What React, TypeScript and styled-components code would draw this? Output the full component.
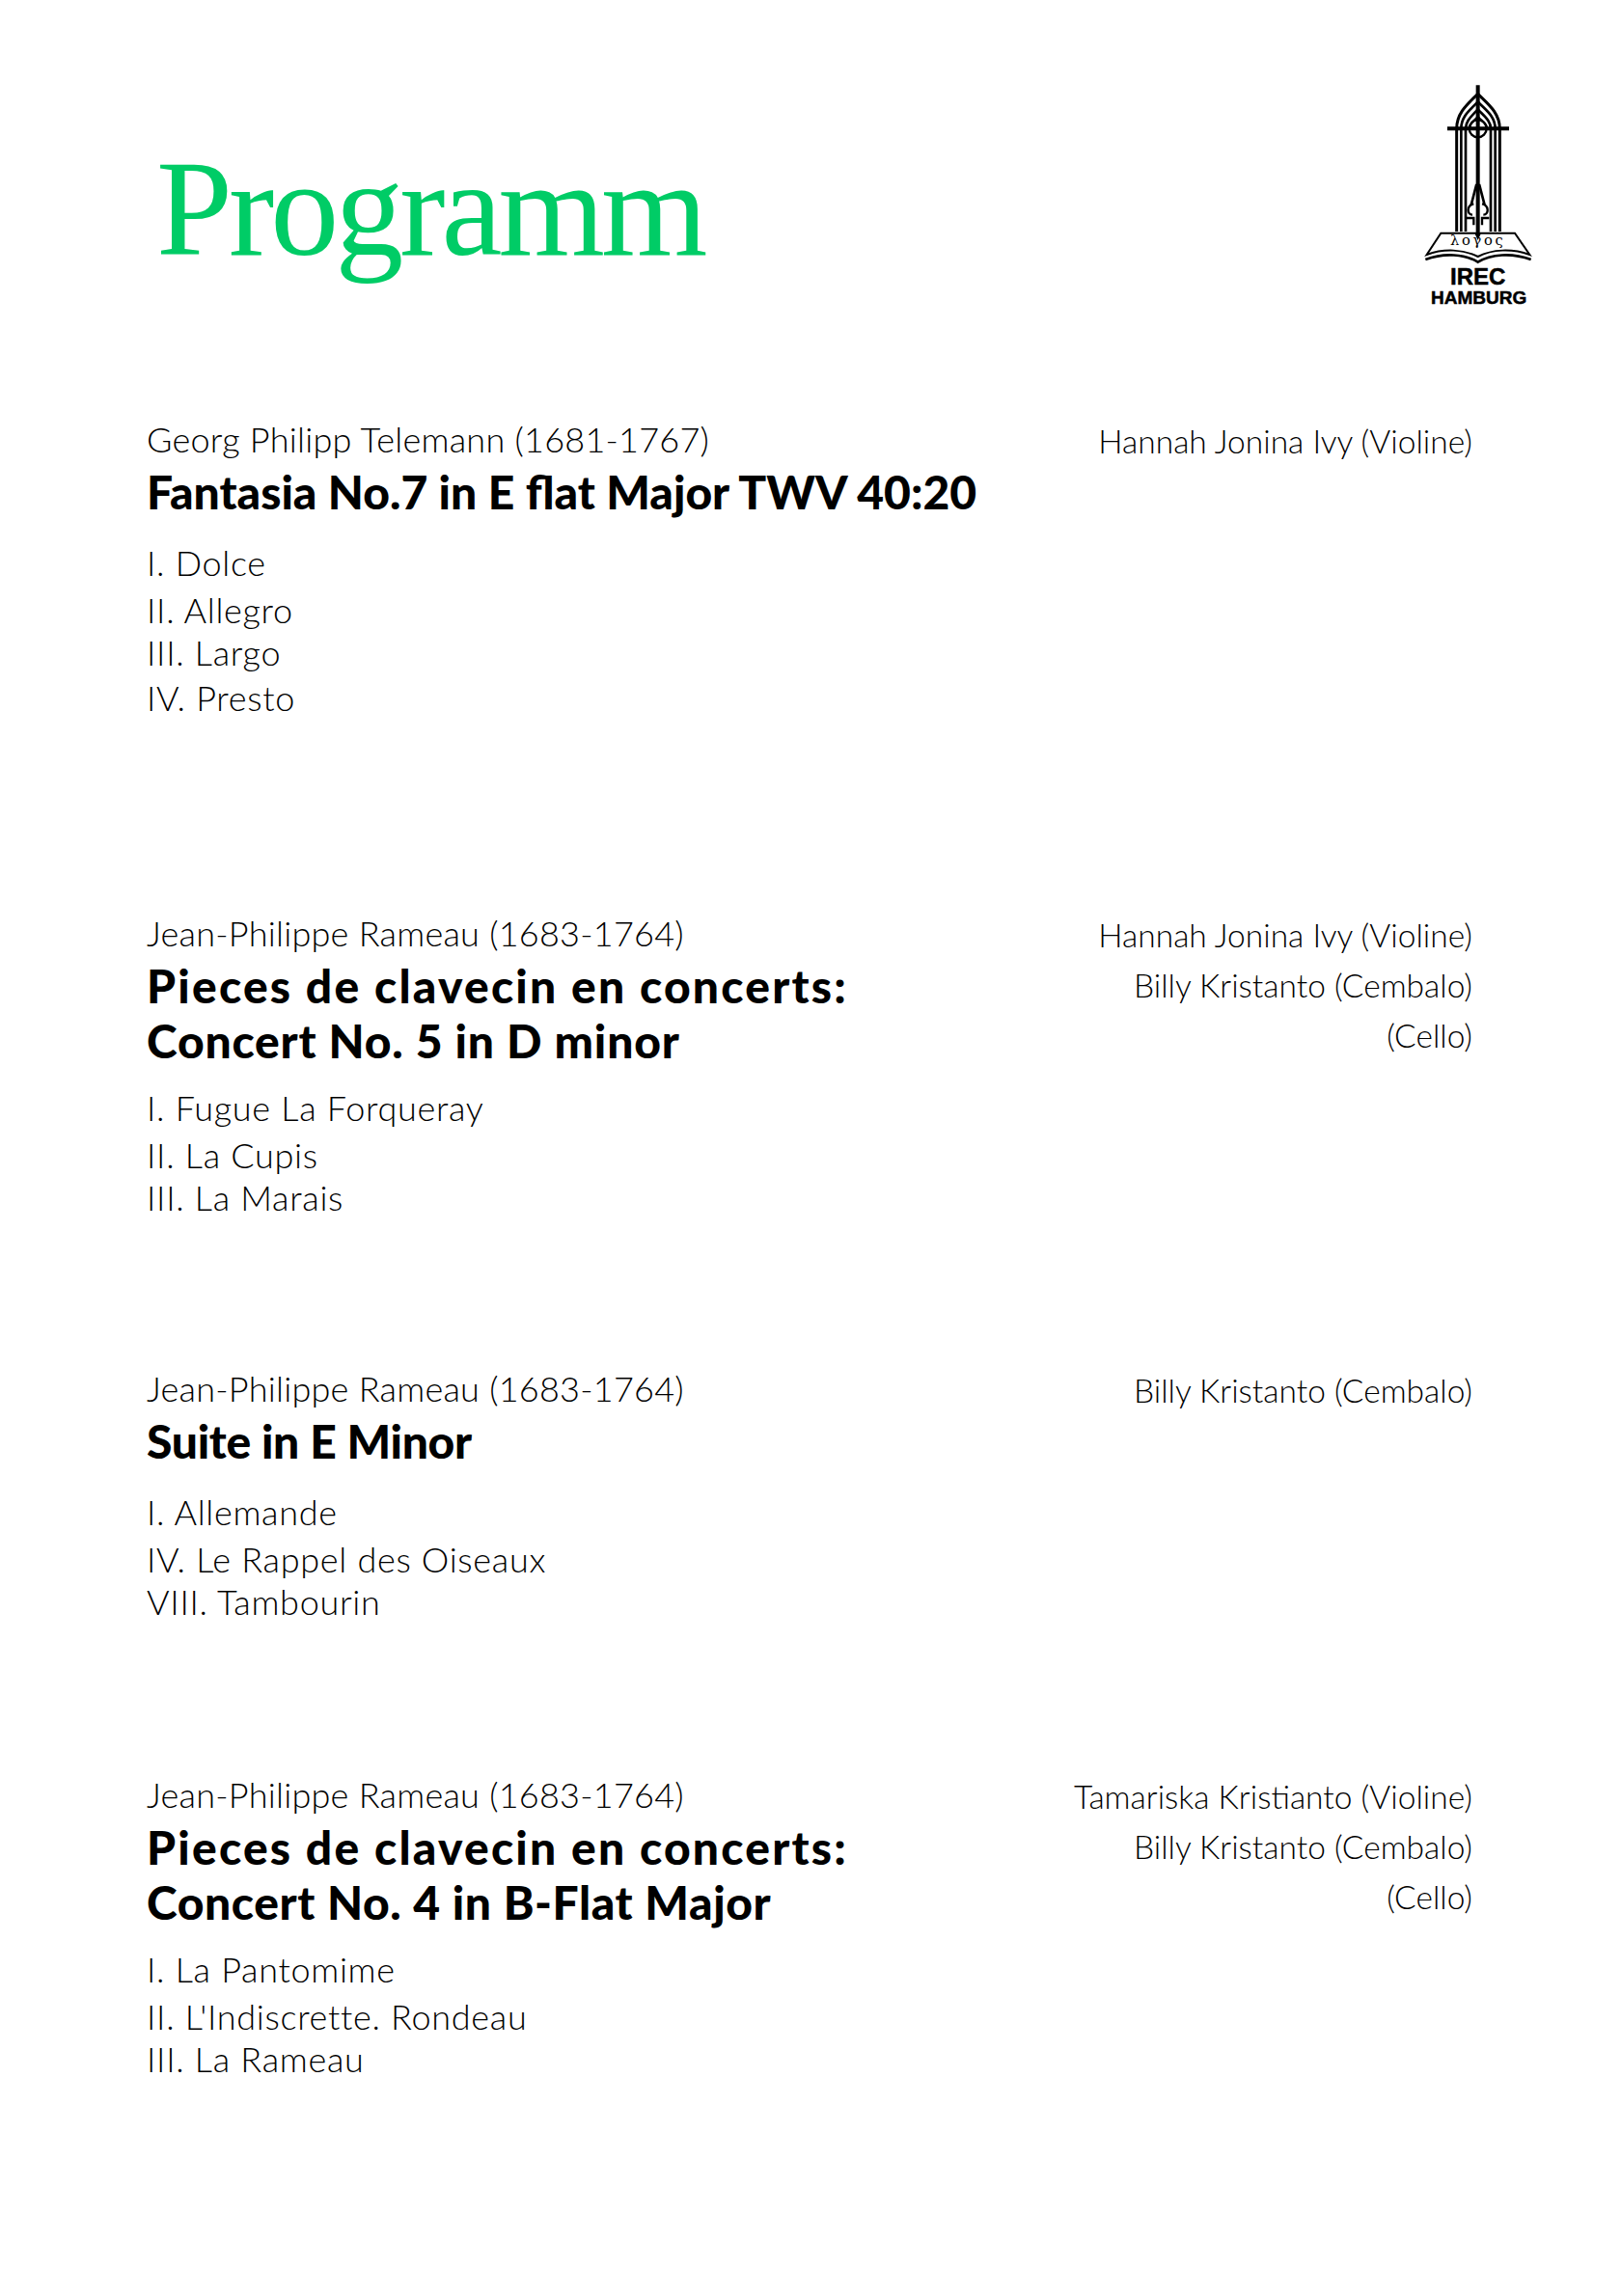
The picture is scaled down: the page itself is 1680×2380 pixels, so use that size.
import React from "react";
import styled, { createGlobalStyle } from "styled-components";

const GlobalStyle = createGlobalStyle`
  html, body {
    margin: 0;
    padding: 0;
    background: #fff;
  }
`;

type TitleLine = { text: string; track: number };

type Piece = {
  composer: string;
  title: TitleLine[];
  parts: string[];
  players: string[];
  space: number;
};

const pieces: Piece[] = [
  {
    composer: "Georg Philipp Telemann (1681-1767)",
    title: [{ text: "Fantasia No.7 in E flat Major TWV 40:20", track: 0 }],
    parts: ["I. Dolce", "II. Allegro", "III. Largo", "IV. Presto"],
    players: ["Hannah Jonina Ivy (Violine)"],
    space: 0,
  },
  {
    composer: "Jean-Philippe Rameau (1683-1764)",
    title: [
      { text: "Pieces de clavecin en concerts:", track: 2.2 },
      { text: "Concert No. 5 in D minor", track: 0.8 },
    ],
    parts: ["I. Fugue La Forqueray", "II. La Cupis", "III. La Marais"],
    players: ["Hannah Jonina Ivy (Violine)", "Billy Kristanto (Cembalo)", "(Cello)"],
    space: 196,
  },
  {
    composer: "Jean-Philippe Rameau (1683-1764)",
    title: [{ text: "Suite in E Minor", track: -0.3 }],
    parts: ["I. Allemande", "IV. Le Rappel des Oiseaux", "VIII. Tambourin"],
    players: ["Billy Kristanto (Cembalo)"],
    space: 150,
  },
  {
    composer: "Jean-Philippe Rameau (1683-1764)",
    title: [
      { text: "Pieces de clavecin en concerts:", track: 2.2 },
      { text: "Concert No. 4 in B-Flat Major", track: 0.6 },
    ],
    parts: ["I. La Pantomime", "II. L'Indiscrette. Rondeau", "III. La Rameau"],
    players: ["Tamariska Kristianto (Violine)", "Billy Kristanto (Cembalo)", "(Cello)"],
    space: 152,
  },
];

const Logo = () => (
  <LogoSvg viewBox="0 0 480 780" aria-label="IREC Hamburg">
    <g fill="none" stroke="#000">
      <path strokeWidth="12" d="M275 55V522M180 190H372" />
      <path strokeWidth="9" d="M209 510V190C209 140 245 112 275 82C305 112 343 140 343 190V510" />
      <path strokeWidth="8" d="M223 510V190C223 150 252 132 275 106C298 132 329 150 329 190V510" />
      <path strokeWidth="8" d="M237 510V190C237 165 257 150 275 130C293 150 315 165 315 190V510" />
      <path strokeWidth="7" d="M250 186C250 172 264 166 275 153C286 166 302 172 302 186" />
      <circle cx="275" cy="190" r="27" strokeWidth="7" />
      <path strokeWidth="8" d="M254 428L270 366H280L296 428" />
      <path strokeWidth="7" d="M262 424C240 428 240 458 258 458M288 424C310 428 310 458 292 458" />
      <path strokeWidth="7" d="M240 468H262V490M288 490V468H310" />
      <path strokeWidth="6" d="M160 515H268L275 530L282 515H390L436 582C380 562 320 565 275 588C230 565 170 562 116 582Z" />
      <path strokeWidth="8" d="M112 597C170 575 235 580 275 605C315 580 380 575 440 597" />
    </g>
    <LogoGreek x="275" y="552" textAnchor="middle">λογος</LogoGreek>
    <LogoName x="275" y="674" textAnchor="middle">IREC</LogoName>
    <LogoCity x="278" y="736" textAnchor="middle">HAMBURG</LogoCity>
  </LogoSvg>
);

const App: React.FC = () => (
  <Page>
    <GlobalStyle />
    <Header>
      <Title>Programm</Title>
      <Logo />
    </Header>
    {pieces.map((piece) => (
      <Row key={piece.composer + piece.title[0].text + piece.space} $space={piece.space}>
        <div>
          <Composer>{piece.composer}</Composer>
          {piece.title.map((line) => (
            <Heading key={line.text} $track={line.track}>
              {line.text}
            </Heading>
          ))}
          <Parts>
            {piece.parts.map((part) => (
              <li key={part}>{part}</li>
            ))}
          </Parts>
        </div>
        <Players>
          {piece.players.map((player) => (
            <li key={player}>{player}</li>
          ))}
        </Players>
      </Row>
    ))}
  </Page>
);

const Page = styled.div`
  box-sizing: border-box;
  width: 1680px;
  height: 2380px;
  padding: 0 154px 0 152px;
  color: #000;
  font-family: "Lato", "Liberation Sans", sans-serif;
  overflow: hidden;
`;

const Header = styled.header`
  display: flex;
  justify-content: space-between;
  align-items: flex-start;
  height: 431px;
  margin-right: -74px;
`;

const Title = styled.h1`
  margin: 141px 0 0 10px;
  font-family: "Liberation Serif", serif;
  font-size: 142px;
  line-height: 150px;
  font-weight: 400;
  letter-spacing: -4px;
  color: #00cc66;
`;

const LogoSvg = styled.svg`
  width: 160px;
  height: 260px;
  margin-top: 70px;
  flex: none;
`;

const LogoGreek = styled.text`
  font-family: "DejaVu Serif", serif;
  font-size: 44px;
  letter-spacing: 8px;
`;

const LogoName = styled.text`
  font-family: "Liberation Sans", sans-serif;
  font-weight: 700;
  font-size: 72px;
  stroke: #000;
  stroke-width: 1.5px;
`;

const LogoCity = styled.text`
  font-family: "Liberation Sans", sans-serif;
  font-weight: 700;
  font-size: 57px;
  stroke: #000;
  stroke-width: 1.5px;
`;

const Row = styled.section<{ $space: number }>`
  display: flex;
  justify-content: space-between;
  align-items: flex-start;
  margin-top: ${(p) => p.$space}px;
`;

const Composer = styled.div`
  margin-bottom: 3px;
  font-size: 36px;
  line-height: 48px;
  font-weight: 300;
  letter-spacing: 0.25px;
`;

const Heading = styled.h2<{ $track: number }>`
  margin: 0;
  font-size: 48px;
  line-height: 56px;
  font-weight: 900;
  letter-spacing: ${(p) => p.$track}px;

  & + & {
    margin: 1px 0 -4px;
  }
`;

const Parts = styled.ul`
  list-style: none;
  margin: 22px 0 0;
  padding: 0;
  font-size: 36px;
  line-height: 47px;
  font-weight: 300;
  letter-spacing: 0.7px;

  li:nth-child(2) {
    margin: 2px 0 -3px;
  }
`;

const Players = styled.ul`
  list-style: none;
  margin: 0;
  padding: 0;
  text-align: right;
  font-size: 33.5px;
  line-height: 52px;
  font-weight: 300;
`;

export default App;
